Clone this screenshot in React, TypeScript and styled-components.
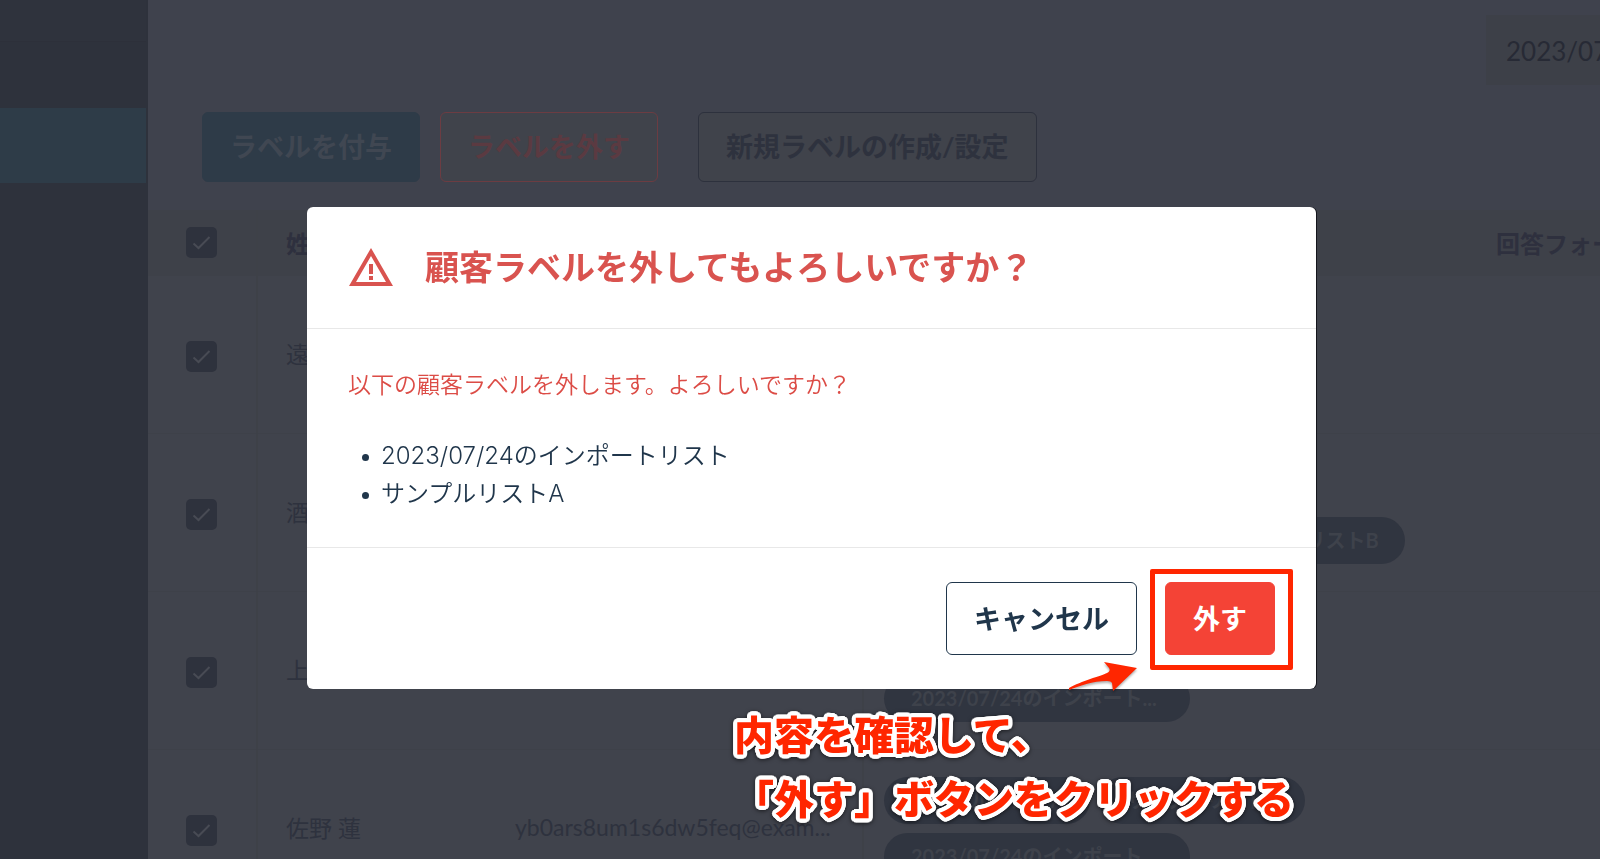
import React from "react";
import styled, { createGlobalStyle, css } from "styled-components";

const GlobalStyle = createGlobalStyle`
  *, *::before, *::after { box-sizing: border-box; }
  body {
    margin: 0;
    background: #40434c;
    font-family: Lato, "Noto Sans CJK JP", sans-serif;
    color: #2e323e;
  }
  button, input { font: inherit; margin: 0; }
`;

const Shell = styled.div`
  display: flex;
  height: 100vh;
  overflow: hidden;
`;

const Sidebar = styled.nav`
  flex: 0 0 148px;
  padding-right: 2px;
  background: #2e323c;
`;

const SidebarTop = styled.div`
  height: 42px;
  margin-bottom: 66px;
  background: #2f333d;
  border-bottom: 1px solid #2d303a;
`;

const SidebarLink = styled.a`
  display: block;
  height: 75px;
  background: #2e3c48;
`;

const Main = styled.main`
  flex: 1;
  min-width: 0;
  overflow: hidden;
`;

const TopBar = styled.header`
  display: flex;
  justify-content: flex-end;
  padding-top: 15px;
  background: #3f424d;
`;

const DateBox = styled.div`
  flex: 0 0 114px;
  height: 70px;
  padding-left: 20px;
  overflow: hidden;
  background: #3d4048;
  color: #272a35;
  font-size: 26px;
  line-height: 72px;
  white-space: nowrap;
`;

const Toolbar = styled.div`
  display: flex;
  gap: 20px;
  padding: 27px 54px 28px;
  background: #3f424d;
`;

const toolTones = {
  primary: css`
    background: #2e3b48;
    border-color: #2e3b48;
    color: #404752;
  `,
  danger: css`
    background: #40434b;
    border-color: #6c3c42;
    color: #5b3a41;
  `,
  plain: css`
    margin-left: 20px;
    background: #40434b;
    border-color: #2d313d;
    color: #2e323e;
  `,
};

const ToolButton = styled.button<{ $tone: keyof typeof toolTones }>`
  height: 70px;
  padding: 0 27px 3px;
  border: 1px solid;
  border-radius: 6px;
  font-size: 27px;
  font-weight: 700;
  white-space: nowrap;
  ${(p) => toolTones[p.$tone]}
`;

const Table = styled.table`
  width: 1700px;
  table-layout: fixed;
  border-collapse: separate;
  border-spacing: 0;
`;

const HeadCell = styled.th`
  height: 66px;
  padding: 0 0 2px 28px;
  background: #3e4149;
  text-align: left;
  font-size: 24px;
  font-weight: 700;
  color: #2e303e;
`;

const Cell = styled.td<{ $line?: boolean }>`
  height: 158px;
  padding: 0 20px 3px 28px;
  border-bottom: 1px solid #3e4149;
  border-right: ${(p) => (p.$line ? "2px solid #3e4148" : "0")};
  font-size: 23px;
  white-space: nowrap;
`;

const TickHead = styled(HeadCell)`
  padding: 0 0 2px 38px;
  border-right: 2px solid #3e4148;
`;

const TickCell = styled(Cell)`
  padding: 3px 0 0 38px;
`;

const LabelCell = styled(Cell)`
  padding: 0 20px;
`;

const TickBox = styled.label`
  display: grid;
  width: 31px;
  height: 31px;

  > * { grid-area: 1 / 1; }
  svg { place-self: center; pointer-events: none; }
`;

const TickInput = styled.input`
  appearance: none;
  width: 31px;
  height: 31px;
  border-radius: 5px;
  background: #2e323d;
`;

const ChipStack = styled.div`
  display: flex;
  flex-direction: column;
  justify-content: flex-end;
  gap: 9px;
  height: 103px;
`;

const ChipLine = styled.div`
  display: flex;
  gap: 9px;
`;

const Chip = styled.span<{ $wide?: boolean }>`
  flex: 0 0 ${(p) => (p.$wide ? "306px" : "206px")};
  height: 47px;
  padding-left: 27px;
  border-radius: 24px;
  background: #303540;
  color: #3e424b;
  font-size: 20px;
  font-weight: 700;
  line-height: 46px;
`;

const Overlay = styled.div`
  position: fixed;
  inset: 0;
  display: flex;
  justify-content: center;
  align-items: flex-start;
  padding: 207px 0 0 23px;
`;

const Dialog = styled.section`
  position: relative;
  width: 64%;
  max-width: 1009px;
  border-radius: 6px;
  background: #fff;
  box-shadow: 1px 0 0 #14151c;
  color: #20364b;
`;

const DialogHeader = styled.header`
  display: flex;
  align-items: center;
  gap: 32px;
  height: 122px;
  padding: 0 42px 2px;
  border-bottom: 1px solid #e8e8e8;
  color: #d9534f;

  svg { flex: none; }
`;

const Title = styled.h2`
  margin: 0;
  font-size: 34px;
  font-weight: 700;
  line-height: 48px;
  white-space: nowrap;
`;

const DialogBody = styled.div`
  padding: 37px 41px 34px;
  border-bottom: 1px solid #e8e8e8;
  font-family: Inter, "Noto Sans CJK JP", sans-serif;
  font-weight: 350;
  line-height: 38px;
`;

const Warning = styled.p`
  margin: 0 0 33px;
  color: #dc4c46;
  font-size: 23px;
`;

const LabelList = styled.ul`
  margin: 0;
  padding: 0 0 0 14px;
  list-style: none;
  font-size: 24px;
`;

const LabelItem = styled.li`
  display: flex;
  align-items: center;
  gap: 12px;

  &::before {
    content: "";
    width: 7px;
    height: 7px;
    margin-top: 3px;
    border-radius: 50%;
    background: #20364b;
  }
`;

const DialogFooter = styled.footer`
  display: flex;
  justify-content: flex-end;
  gap: 28px;
  padding: 34px 41px;
`;

const DialogButton = styled.button<{ $danger?: boolean }>`
  height: 73px;
  padding: 0 27px 3px;
  border: 1px solid ${(p) => (p.$danger ? "#f44336" : "#20364b")};
  border-radius: 6px;
  background: ${(p) => (p.$danger ? "#f44336" : "#fff")};
  color: ${(p) => (p.$danger ? "#fff" : "#20364b")};
  font-size: 27px;
  font-weight: 700;
  white-space: nowrap;
`;

const Highlighted = styled.div`
  position: relative;

  &::after {
    content: "";
    position: absolute;
    inset: -13px -18px -15px -15px;
    border: 5px solid #ff2600;
    border-radius: 2px;
    pointer-events: none;
  }
`;

const Arrow = styled.svg`
  position: absolute;
  right: 176px;
  bottom: -4px;
  filter: drop-shadow(0 2px 1px rgba(0, 0, 0, 0.3));
`;

/* A ring of solid shadows gives the lettering an outline with round corners. */
const outline = Array.from({ length: 24 }, (_, i) => {
  const a = (i / 24) * Math.PI * 2;
  return `${(Math.cos(a) * 4).toFixed(2)}px ${(Math.sin(a) * 4).toFixed(2)}px 0 #fff`;
}).join(", ");

const Note = styled.p`
  position: absolute;
  right: 22px;
  top: 494px;
  margin: 0;
  color: #ff2600;
  font-family: "Noto Sans CJK JP", sans-serif;
  font-size: 40px;
  font-weight: 900;
  line-height: 64px;
  white-space: nowrap;
  text-spacing-trim: space-all;
  text-shadow: ${outline};
  filter: drop-shadow(0 1px 2px rgba(0, 0, 0, 0.6));
`;

type ChipData = { text: string; wide?: boolean };
type Customer = { name: string; email?: string; lines: ChipData[][] };

const importList: ChipData = { text: "2023/07/24のインポート...", wide: true };
const sampleA: ChipData = { text: "サンプルリストA" };
const sampleB: ChipData = { text: "サンプルリストB" };

const customers: Customer[] = [
  { name: "遠", lines: [] },
  { name: "酒", lines: [[importList, sampleB]] },
  { name: "上", lines: [[importList]] },
  {
    name: "佐野 蓮",
    email: "yb0ars8um1s6dw5feq@exam...",
    lines: [[sampleA, sampleB], [importList]],
  },
];

function Tick({ label }: { label: string }) {
  return (
    <TickBox>
      <TickInput type="checkbox" defaultChecked aria-label={label} />
      <svg width="19" height="15" viewBox="0 0 19 15" fill="none" stroke="#484b54" strokeWidth="2">
        <path d="M1.5 8.5 6.5 13 17.5 2" />
      </svg>
    </TickBox>
  );
}

export default function App() {
  return (
    <>
      <GlobalStyle />
      <Shell>
        <Sidebar>
          <SidebarTop />
          <SidebarLink href="#customers" />
        </Sidebar>
        <Main>
          <TopBar>
            <DateBox>2023/07</DateBox>
          </TopBar>
          <Toolbar>
            <ToolButton $tone="primary">ラベルを付与</ToolButton>
            <ToolButton $tone="danger">ラベルを外す</ToolButton>
            <ToolButton $tone="plain">新規ラベルの作成/設定</ToolButton>
          </Toolbar>
          <Table>
            <colgroup>
              <col style={{ width: 110 }} />
              <col style={{ width: 229 }} />
              <col style={{ width: 377 }} />
              <col style={{ width: 604 }} />
              <col />
            </colgroup>
            <thead>
              <tr>
                <TickHead>
                  <Tick label="すべて" />
                </TickHead>
                <HeadCell>姓</HeadCell>
                <HeadCell />
                <HeadCell />
                <HeadCell>回答フォーム</HeadCell>
              </tr>
            </thead>
            <tbody>
              {customers.map((c) => (
                <tr key={c.name}>
                  <TickCell $line>
                    <Tick label={c.name} />
                  </TickCell>
                  <Cell>{c.name}</Cell>
                  <Cell $line>{c.email}</Cell>
                  <LabelCell>
                    <ChipStack>
                      {c.lines.map((line, i) => (
                        <ChipLine key={i}>
                          {line.map((chip) => (
                            <Chip key={chip.text} $wide={chip.wide}>
                              {chip.text}
                            </Chip>
                          ))}
                        </ChipLine>
                      ))}
                    </ChipStack>
                  </LabelCell>
                  <Cell />
                </tr>
              ))}
            </tbody>
          </Table>
        </Main>
      </Shell>
      <Overlay>
        <Dialog role="dialog" aria-modal="true" aria-labelledby="dialog-title">
          <DialogHeader>
            <svg width="44" height="38" viewBox="0 0 44 38" fill="currentColor">
              <path fillRule="evenodd" d="M22 0 44 38H0ZM22 8 7 34H37Z" />
              <path d="M20 16h4v10h-4zM20 28h4v4h-4z" />
            </svg>
            <Title id="dialog-title">顧客ラベルを外してもよろしいですか？</Title>
          </DialogHeader>
          <DialogBody>
            <Warning>以下の顧客ラベルを外します。よろしいですか？</Warning>
            <LabelList>
              <LabelItem>2023/07/24のインポートリスト</LabelItem>
              <LabelItem>サンプルリストA</LabelItem>
            </LabelList>
          </DialogBody>
          <DialogFooter>
            <DialogButton>キャンセル</DialogButton>
            <Highlighted>
              <DialogButton $danger>外す</DialogButton>
            </Highlighted>
          </DialogFooter>
          <Arrow width="73" height="34" viewBox="0 0 73 34" fill="#ff2600">
            <path d="M2 29C14 22 34 17 40 14Q44 12 42 9L37 3 70 9 46 32 45 24Q44 22 40 22C26 22 12 27 2 31Z" />
          </Arrow>
          <Note>
            内容を確認して、
            <br />
            「外す」ボタンをクリックする
          </Note>
        </Dialog>
      </Overlay>
    </>
  );
}
